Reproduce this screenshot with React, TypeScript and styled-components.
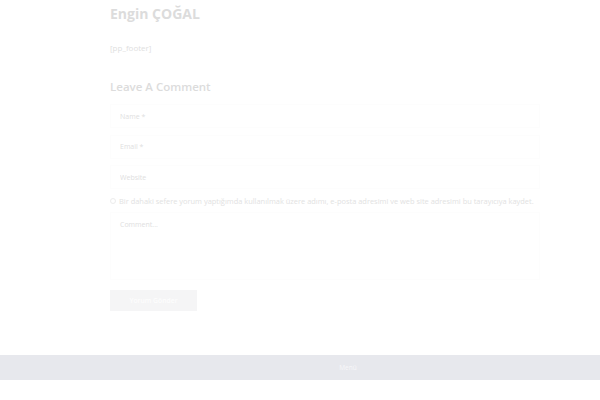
import React from "react";
import styled, { createGlobalStyle } from "styled-components";

const Global = createGlobalStyle`
  html, body { margin: 0; padding: 0; background: #fff; }
  body { font-family: "Open Sans", "Liberation Sans", sans-serif; }
`;

const Page = styled.div`
  width: 600px;
  min-height: 400px;
  display: flex;
  flex-direction: column;
`;

const Main = styled.div`
  width: 430px;
  margin-left: 110px;
  padding-top: 4px;
  display: flex;
  flex-direction: column;
`;

const Title = styled.h1`
  margin: 0;
  font-size: 14px;
  font-weight: 700;
  color: #dcdcdc;
  line-height: 20px;
`;

const Shortcode = styled.p`
  margin: 18px 0 0;
  font-size: 8px;
  color: #e0e0e0;
  line-height: 12px;
`;

const Reply = styled.h3`
  margin: 25px 0 0;
  font-size: 11.5px;
  font-weight: 600;
  color: #dcdcdc;
  line-height: 16px;
`;

const Form = styled.form`
  margin-top: 9px;
  display: flex;
  flex-direction: column;
  gap: 6.5px;
`;

const Field = styled.input`
  height: 24px;
  box-sizing: border-box;
  border: 1px solid #fdfdfd;
  background: #fff;
  padding: 0 9px;
  font-family: inherit;
  font-size: 7px;
  color: #e0e0e0;
  &::placeholder { color: #e0e0e0; }
  outline: none;
`;

const Consent = styled.label`
  display: flex;
  align-items: center;
  gap: 3px;
  font-size: 7.45px;
  color: #e2e2e2;
  white-space: nowrap;
`;

const Box = styled.span`
  flex: none;
  width: 4px;
  height: 4px;
  border: 1px solid #ececec;
  border-radius: 50%;
`;

const Area = styled.textarea`
  height: 68px;
  box-sizing: border-box;
  border: 1px solid #fdfdfd;
  padding: 7px 9px;
  resize: none;
  font-family: inherit;
  font-size: 7px;
  &::placeholder { color: #e0e0e0; }
  outline: none;
`;

const Submit = styled.button`
  margin-top: 3px;
  width: 87px;
  height: 21px;
  border: none;
  background: #f5f5f6;
  color: #fdfdfd;
  font-family: inherit;
  font-size: 6.8px;
  font-weight: 600;
  cursor: pointer;
`;

const Footer = styled.footer`
  margin-top: 44px;
  height: 25px;
  background: #e7e8ed;
  display: flex;
  align-items: center;
  justify-content: center;
  font-size: 6.5px;
  color: #f7f7f9;
  padding-left: 96px;
`;

export default function App() {
  return (
    <Page>
      <Global />
      <Main>
        <Title>Engin ÇOĞAL</Title>
        <Shortcode>[pp_footer]</Shortcode>
        <Reply>Leave A Comment</Reply>
        <Form onSubmit={(e) => e.preventDefault()}>
          <Field placeholder="Name *" />
          <Field placeholder="Email *" />
          <Field placeholder="Website" />
          <Consent>
            <Box />
            Bir dahaki sefere yorum yaptığımda kullanılmak üzere adımı, e-posta adresimi ve web site adresimi bu tarayıcıya kaydet.
          </Consent>
          <Area placeholder="Comment..." />
          <Submit type="submit">Yorum Gönder</Submit>
        </Form>
      </Main>
      <Footer>Menü</Footer>
    </Page>
  );
}
